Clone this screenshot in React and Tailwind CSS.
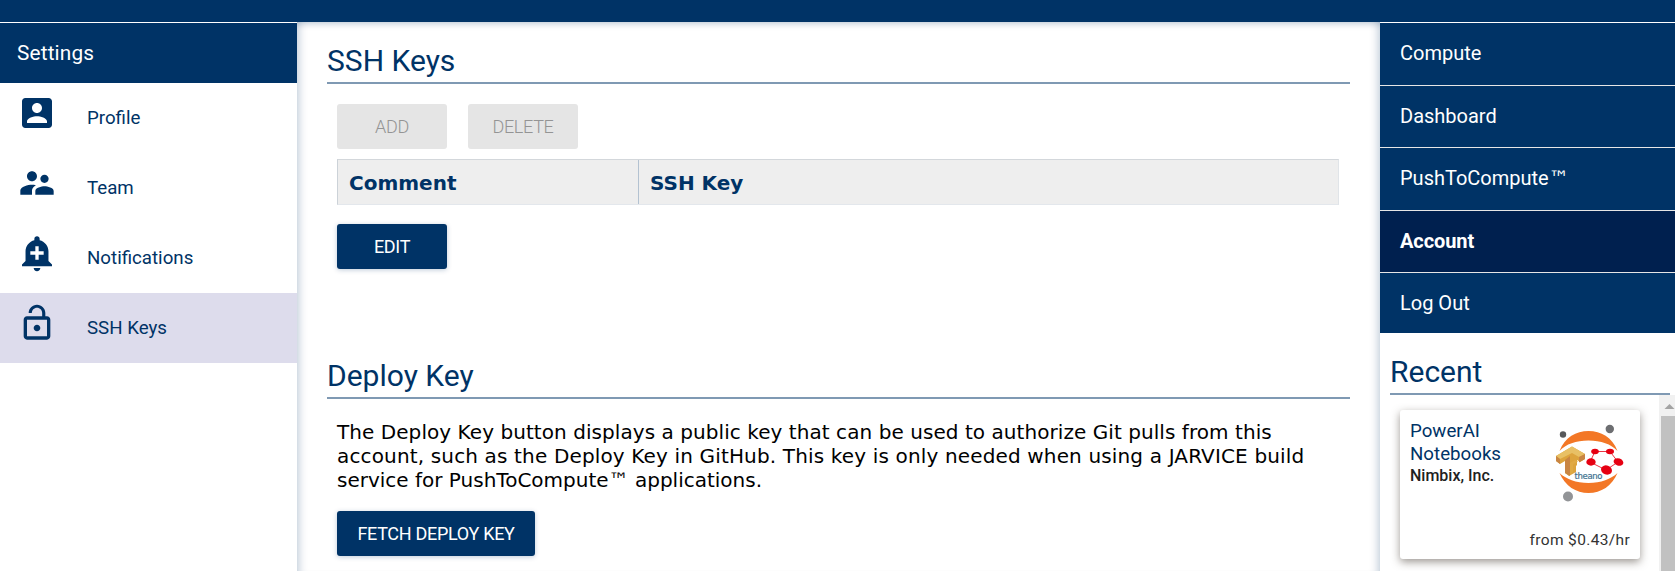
const settings = [
  {
    label: "Profile",
    d: "M3 5v14c0 1.1.89 2 2 2h14c1.1 0 2-.9 2-2V5c0-1.1-.9-2-2-2H5c-1.11 0-2 .9-2 2zm12 4c0 1.66-1.34 3-3 3s-3-1.34-3-3 1.34-3 3-3 3 1.34 3 3zm-9 8c0-2 4-3.1 6-3.1s6 1.1 6 3.1v1H6v-1z",
  },
  {
    label: "Team",
    d: "M16.5 12c1.38 0 2.49-1.12 2.49-2.5S17.88 7 16.5 7C15.12 7 14 8.12 14 9.5s1.12 2.5 2.5 2.5zM9 11c1.66 0 2.99-1.34 2.99-3S10.66 5 9 5C7.34 5 6 6.34 6 8s1.34 3 3 3zm7.5 3c-1.83 0-5.5.92-5.5 2.75V19h11v-2.25c0-1.83-3.67-2.75-5.5-2.75zM9 13c-2.33 0-7 1.17-7 3.5V19h7v-2.25c0-.85.33-2.34 2.37-3.47C10.5 13.1 9.66 13 9 13z",
  },
  {
    label: "Notifications",
    d: "M10.01 21.01c0 1.1.89 1.99 1.99 1.99s1.99-.89 1.99-1.99h-3.98zm8.87-4.19V11c0-3.25-2.25-5.97-5.29-6.69v-.72C13.59 2.71 12.88 2 12 2s-1.59.71-1.59 1.59v.72C7.37 5.03 5.12 7.75 5.12 11v5.82L3 18.94V20h18v-1.06l-2.12-2.12zM16 13.01h-3v3h-2v-3H8V11h3V8h2v3h3v2.01z",
  },
  {
    label: "SSH Keys",
    active: true,
    d: "M12 17c1.1 0 2-.9 2-2s-.9-2-2-2-2 .9-2 2 .9 2 2 2zm6-9h-1V6c0-2.76-2.24-5-5-5S7 3.24 7 6h1.9c0-1.71 1.39-3.1 3.1-3.1 1.71 0 3.1 1.39 3.1 3.1v2H6c-1.1 0-2 .9-2 2v10c0 1.1.9 2 2 2h12c1.1 0 2-.9 2-2V10c0-1.1-.9-2-2-2zm0 12H6V10h12v10z",
  },
];

const nav = [
  { label: "Compute", cls: "h-[63px] border-b pb-[2px]" },
  { label: "Dashboard", cls: "h-[62px] border-b pb-px" },
  {
    label: (
      <span>
        PushToCompute
        <span className="font-['DejaVu_Sans',sans-serif] text-[20px] leading-none">™</span>
      </span>
    ),
    cls: "h-[63px] border-b pb-[2px]",
  },
  { label: "Account", cls: "h-[62px] border-b bg-[#00204f] pb-px font-bold tracking-[-0.1px]" },
  { label: "Log Out", cls: "h-[60px]" },
];

function Heading({ children, className = "" }) {
  return (
    <h2 className={`border-b-2 border-[#7f99b3] text-[30px] leading-[42px] text-[#003366] ${className}`}>
      {children}
    </h2>
  );
}

function Button({ children, disabled, className = "w-[110px]" }) {
  return (
    <button
      disabled={disabled}
      className={`h-[45px] rounded-[3px] text-[18px] tracking-[-0.3px] ${className} ${
        disabled ? "bg-[#e5e5e5] font-light text-[#949494]" : "bg-[#003366] text-white shadow-[0_1px_5px_rgba(0,51,102,0.25)]"
      }`}
    >
      {children}
    </button>
  );
}

function NotebookLogo() {
  return (
    <svg width="70" height="80" viewBox="0 0 70 80" className="shrink-0">
      <circle cx="8" cy="10.5" r="3.2" fill="#58595b" />
      <circle cx="54.8" cy="5" r="4.2" fill="#6d6e71" />
      <circle cx="13" cy="72.5" r="5" fill="#929497" />
      <path d="M4.5 27C10 13 21 7 33.5 7S57 13 62.5 27C56 20 46 16.5 33.5 16.5S11 20 4.5 27Z" fill="#f37726" />
      <path d="M4.5 49C10 62 21 69 33.5 69S57 62 62.5 49C56 55 46 59 33.5 59S11 55 4.5 49Z" fill="#f37726" />
      <path d="M1 32 17 22.5l13 7.5v5l-5 3-3-2v5l-1 1v6l-7 4-4-3V37l-5 3-4-3Z" fill="#dda43d" />
      <path d="m1 32 16-9.5 13 7.5-6 3-7-4-12 6Z" fill="#e8c065" />
      <path d="m10 36 5-4v20l-5-3Z" fill="#c98543" />
      <path d="m15 39 5-3 3 1.5-5 3v8l-3 2Z" fill="#e0aa45" />
      <path d="m24 33 6-3v5l-6 3.500ZM1 32l4 3v5l-4-3Z" fill="#c98543" />
      <path d="M40 27.5h15l8 10.5-12 8-16-8Z" stroke="#e60012" strokeWidth="0.8" fill="none" />
      <g fill="#e60012">
        <ellipse cx="40" cy="27.5" rx="3.8" ry="2.7" />
        <ellipse cx="55" cy="27.5" rx="4" ry="2.7" />
        <ellipse cx="36" cy="38" rx="4.7" ry="3.7" />
        <ellipse cx="63.5" cy="38" rx="5" ry="3.6" transform="rotate(18 63.5 38)" />
        <ellipse cx="51.5" cy="46" rx="5.6" ry="4.5" transform="rotate(20 51.5 46)" />
      </g>
      <text x="19.5" y="55" fontSize="8.5" textLength="28" stroke="#3f7391" strokeWidth="0.2" fontFamily="DejaVu Sans, sans-serif" fill="#3f7391">
        theano
      </text>
    </svg>
  );
}

export default function App() {
  return (
    <div className="flex h-[571px] w-[1675px] flex-col overflow-hidden bg-white font-[Roboto,sans-serif]">
      <header className="h-[22px] shrink-0 bg-[#003366]" />
      <div className="flex min-h-0 flex-1">
        <aside className="w-[297px] shrink-0 bg-white pt-px">
          <div className="flex h-[60px] items-center bg-[#003366] pl-[17px] pt-px text-[20.8px] leading-[31px] tracking-[0.15px] text-white">
            Settings
          </div>
          {settings.map((s) => (
            <div
              key={s.label}
              className={`flex h-[70px] pl-[17px] text-[18.72px] text-[#003366] ${s.active ? "bg-[#dddcec]" : ""}`}
            >
              <svg width="40" height="40" viewBox="0 0 24 24" fill="currentColor" className="mt-[10px]">
                <path d={s.d} />
              </svg>
              <span className="ml-[30px] leading-[70px]">{s.label}</span>
            </div>
          ))}
        </aside>

        <main className="w-[1083px] shrink-0 px-[30px] pt-[18px] shadow-[inset_10px_0_8px_-8px_rgba(0,51,102,0.25),inset_-10px_0_8px_-8px_rgba(0,51,102,0.25),inset_0_8px_6px_-6px_rgba(0,51,102,0.25)]">
          <Heading className="h-[44px]">SSH Keys</Heading>
          <div className="flex gap-[21px] pl-[10px] pt-[20px]">
            <Button disabled>ADD</Button>
            <Button disabled>DELETE</Button>
          </div>
          <div className="ml-[10px] mt-[10px] flex h-[46px] w-[1002px] border border-b-[#e3e7ec] border-l-[#ccd2d8] border-r-[#e0e4e8] border-t-[#d3d7db] bg-[#eeeeee] font-['DejaVu_Sans',sans-serif] text-[20px] font-bold leading-[46px] text-[#003366]">
            <div className="w-[301px] border-r border-[#b3c2d1] pl-[11px]">Comment</div>
            <div className="pl-[11px]">SSH Key</div>
          </div>
          <div className="pl-[10px] pt-[19px]">
            <Button>EDIT</Button>
          </div>
          <Heading className="mt-[86px] h-[44px]">Deploy Key</Heading>
          <p className="whitespace-nowrap pl-[10px] pt-[21px] font-['DejaVu_Sans',sans-serif] text-[20px] leading-[24px] text-black">
            <span className="tracking-[0.06px]">
              The Deploy Key button displays a public key that can be used to authorize Git pulls from this
            </span>
            <br />
            <span className="tracking-[0.15px]">
              account, such as the Deploy Key in GitHub. This key is only needed when using a JARVICE build
            </span>
            <br />
            service for PushToCompute™ applications.
          </p>
          <div className="pl-[10px] pt-[19px]">
            <Button className="w-[198px]">FETCH DEPLOY KEY</Button>
          </div>
        </main>

        <aside className="flex w-[295px] shrink-0 flex-col bg-white pt-px">
          <nav className="bg-[#003366] text-[20px] leading-[30px] text-white">
            {nav.map((n, i) => (
              <div key={i} className={`flex items-center border-[#e6e6e6] pl-[20px] ${n.cls}`}>
                {n.label}
              </div>
            ))}
          </nav>
          <Heading className="ml-[10px] mr-[5px] mt-[18px] h-[44px]">Recent</Heading>
          <div className="flex flex-1 justify-between pl-[20px]">
            <div className="mt-[15px] flex h-[149px] w-[240px] flex-col justify-between rounded-[3px] bg-white px-[10px] pb-[8px] pt-[10px] shadow-[0_3px_8px_rgba(60,50,40,0.5)]">
              <div className="flex justify-between">
                <div className="text-[18.72px] leading-[23px] text-[#003366]">
                  PowerAI
                  <br />
                  Notebooks
                  <div className="text-[16px] font-medium leading-[20px] text-[#212121]">Nimbix, Inc.</div>
                </div>
                <div className="mr-[5px] mt-[4px]">
                  <NotebookLogo />
                </div>
              </div>
              <div className="text-right text-[15.5px] leading-[22px] tracking-[0.35px] text-[#333333]">from $0.43/hr</div>
            </div>
            <div className="flex w-[16px] flex-col bg-[#f1f1f1] pl-[2px]">
              <svg width="14" height="21" viewBox="0 0 14 21" className="shrink-0">
                <path d="M3.5 14 8.5 9l5 5Z" fill="#a3a3a3" />
              </svg>
              <div className="flex-1 bg-[#c1c1c1]" />
            </div>
          </div>
        </aside>
      </div>
    </div>
  );
}
